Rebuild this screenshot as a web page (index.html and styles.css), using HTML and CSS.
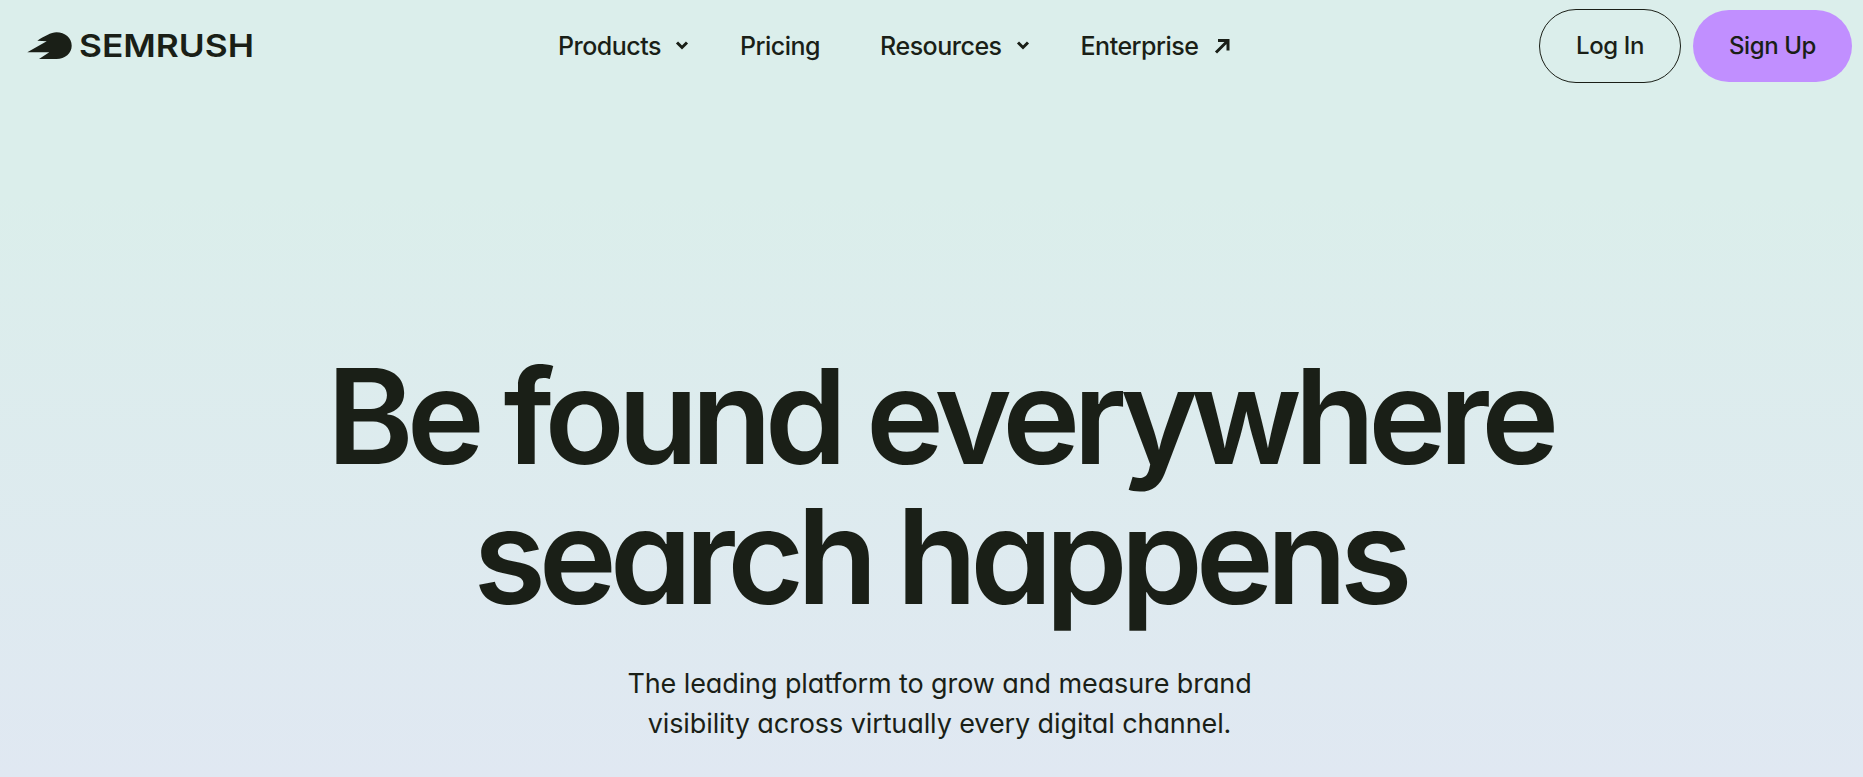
FILE: index.html
```html
<!DOCTYPE html>
<html lang="en">
<head>
    <meta charset="UTF-8">
    <meta name="viewport" content="width=device-width, initial-scale=1.0">
    <title>Semrush</title>
    <link rel="stylesheet" href="styles.css">
</head>
<body>
<header class="topbar">
    <a class="logo" href="#">
        <svg class="logo-mark" width="45" height="28" viewBox="0 0 45 28">
            <path d="M29.5 .3 C24 .3 17 4.5 10.3 8.7 L19.7 9.3 L.3 20.3 H22.3 L12 27 H29.5 C38 27 44.7 21 44.7 13.7 C44.7 6 38 .3 29.5 .3 Z"/>
        </svg>
        <span class="logo-text">SEMRUSH</span>
    </a>
    <nav class="nav">
        <a href="#">Products <svg class="chev" width="14" height="9" viewBox="0 0 14 9"><path d="M2 1.5 L7 6.5 L12 1.5"/></svg></a>
        <a href="#">Pricing</a>
        <a href="#">Resources <svg class="chev" width="14" height="9" viewBox="0 0 14 9"><path d="M2 1.5 L7 6.5 L12 1.5"/></svg></a>
        <a href="#">Enterprise <svg class="arrow" width="16" height="16" viewBox="0 0 16 16"><path d="M2 14.5 L13.5 3 M4 2.5 H14 V12.5"/></svg></a>
    </nav>
    <div class="actions">
        <a class="btn btn-login" href="#">Log In</a>
        <a class="btn btn-signup" href="#">Sign Up</a>
    </div>
</header>
<main class="hero">
    <h1>Be found everywhere<br>search happens</h1>
    <p>The leading platform to grow and measure brand<br>visibility across virtually every digital channel.</p>
</main>
</body>
</html>
```
FILE: styles.css
```css
html, body {
    height: 100%;
}
body {
    margin: 0;
    overflow: hidden;
    font-family: Inter, "Liberation Sans", sans-serif;
    font-feature-settings: "cv11";
    color: #1a1f17;
    background: linear-gradient(180deg, #dbeeeb 0%, #dbeeeb 25%, #e0e8f2 100%);
}
a {
    color: inherit;
    text-decoration: none;
}
.topbar {
    display: flex;
    align-items: center;
    height: 91px;
    padding: 0 11px 0 27px;
}
.logo {
    display: flex;
    align-items: center;
    gap: 7px;
    width: 226px;
}
.logo-text {
    font-size: 31.5px;
    font-weight: 600;
    transform: scaleX(1.12);
    transform-origin: left center;
}
.logo-mark {
    fill: #1a1f17;
}
.nav {
    display: flex;
    gap: 60px;
    margin-left: 305px;
    font-size: 25px;
    font-weight: 500;
    letter-spacing: -0.5px;
}
.nav a {
    display: flex;
    align-items: center;
    gap: 14px;
}
.chev, .arrow {
    fill: none;
    stroke: #1a1f17;
    stroke-width: 3;
}
.chev {
    margin-right: -9px;
}
.arrow {
    margin-left: 2px;
}
.actions {
    display: flex;
    align-items: center;
    gap: 12px;
    margin-left: auto;
}
.btn {
    display: flex;
    align-items: center;
    justify-content: center;
    font-size: 24px;
    font-weight: 500;
    letter-spacing: -0.4px;
    border-radius: 37px;
}
.btn-login {
    width: 140px;
    height: 72px;
    border: 1px solid #1a1f17;
}
.btn-signup {
    width: 159px;
    height: 72px;
    background: #c18fff;
}
.hero {
    text-align: center;
    padding: 255px 0 0 16px;
}
.hero h1 {
    margin: 0;
    font-size: 132px;
    font-weight: 560;
    line-height: 140px;
    letter-spacing: -7.2px;
}
.hero p {
    margin: 38px 0 0;
    font-size: 27px;
    line-height: 40px;
    letter-spacing: -0.1px;
}
```
